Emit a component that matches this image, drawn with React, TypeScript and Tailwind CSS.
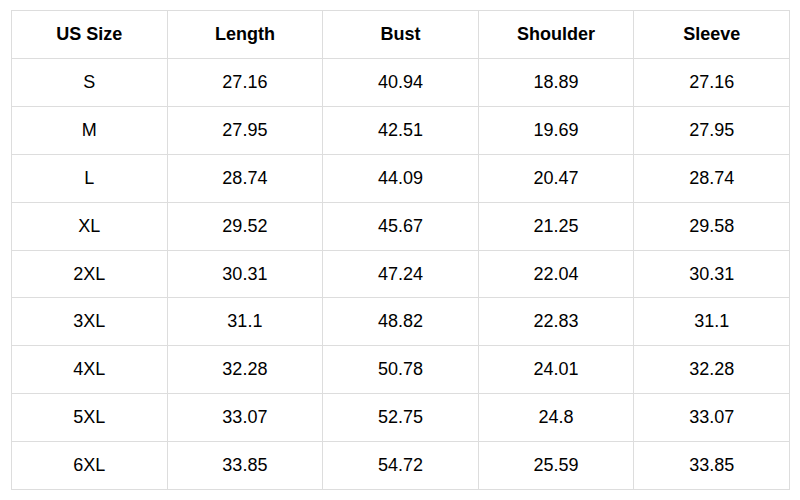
const HEAD = ["US Size", "Length", "Bust", "Shoulder", "Sleeve"];

const ROWS = [
  ["S", "27.16", "40.94", "18.89", "27.16"],
  ["M", "27.95", "42.51", "19.69", "27.95"],
  ["L", "28.74", "44.09", "20.47", "28.74"],
  ["XL", "29.52", "45.67", "21.25", "29.58"],
  ["2XL", "30.31", "47.24", "22.04", "30.31"],
  ["3XL", "31.1", "48.82", "22.83", "31.1"],
  ["4XL", "32.28", "50.78", "24.01", "32.28"],
  ["5XL", "33.07", "52.75", "24.8", "33.07"],
  ["6XL", "33.85", "54.72", "25.59", "33.85"],
];

export default function App() {
  return (
    <div className="w-[800px] h-[500px] bg-white pt-[10px] pl-[11px] font-['Liberation_Sans',Arial,sans-serif] text-[18px] text-black">
      <table className="w-[779px] border-collapse table-fixed">
        <thead>
          <tr className="h-[48px]">
            {HEAD.map((h) => (
              <th key={h} className="border border-[#dddddd] font-bold text-center p-0">
                {h}
              </th>
            ))}
          </tr>
        </thead>
        <tbody>
          {ROWS.map((r) => (
            <tr key={r[0]} className="h-[47.9px]">
              {r.map((c, i) => (
                <td key={i} className="border border-[#dddddd] text-center p-0">
                  {c}
                </td>
              ))}
            </tr>
          ))}
        </tbody>
      </table>
    </div>
  );
}
